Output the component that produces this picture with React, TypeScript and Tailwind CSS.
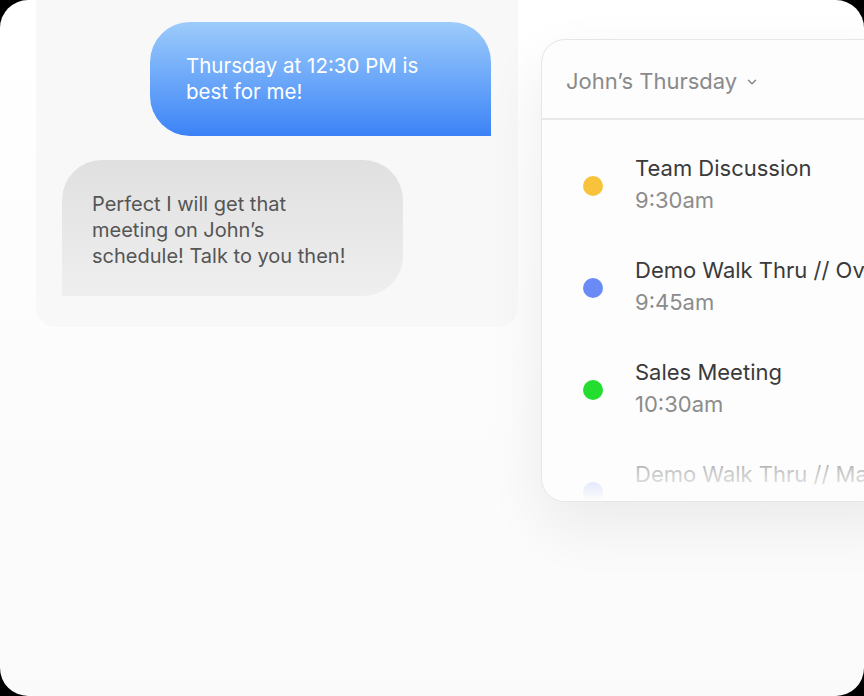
import { ChevronDown } from 'lucide-react'

interface Evento {
  titulo: string
  hora: string
  color: string
}

const eventos: Evento[] = [
  { titulo: 'Team Discussion', hora: '9:30am', color: 'bg-[#f7c33a]' },
  { titulo: 'Demo Walk Thru // Overview', hora: '9:45am', color: 'bg-[#6a8bf6]' },
  { titulo: 'Sales Meeting', hora: '10:30am', color: 'bg-[#23dd2f]' },
  { titulo: 'Demo Walk Thru // Marketing', hora: '11:00am', color: 'bg-[#6a8bf6]' },
]

export default function App() {
  return (
    <div className="h-[696px] w-[864px] bg-black" style={{ fontFamily: 'Inter, "Liberation Sans", sans-serif' }}>
      <div className="flex h-full w-full overflow-hidden rounded-[28px] bg-gradient-to-b from-white to-[#fafafa]">
        {/* chat */}
        <div className="ml-[36px] flex h-[327px] w-[482px] shrink-0 flex-col rounded-b-[20px] bg-[#f8f8f8] pt-[22px]">
          <div className="ml-[114px] w-[341px] rounded-t-[40px] rounded-bl-[40px] bg-gradient-to-b from-[#9dcbfa] to-[#3b82f6] px-[36px] pt-[31px] pb-[31px] text-[20.5px] leading-[26px] text-white">
            Thursday at 12:30 PM is
            <br />
            best for me!
          </div>
          <div className="mt-[24px] ml-[26px] w-[341px] rounded-t-[40px] rounded-br-[40px] bg-gradient-to-b from-[#e0e0e0] to-[#efefef] px-[30px] pt-[31px] pb-[27px] text-[20px] leading-[26px] text-[#555555]">
            Perfect I will get that
            <br />
            meeting on John&rsquo;s
            <br />
            schedule! Talk to you then!
          </div>
        </div>

        {/* calendario */}
        <div className="relative mt-[39px] ml-[23px] h-[463px] w-[380px] shrink-0 overflow-hidden rounded-[24px] border border-[#e6e6e6] bg-[#fdfdfd] shadow-[0_24px_60px_rgba(0,0,0,0.07)]">
          <div className="flex h-[80px] items-center gap-[8px] border-b-2 border-[#e8e8e8] pl-[24px] pt-[4px]">
            <span className="text-[22px] whitespace-nowrap text-[#8a8a8a]">John&rsquo;s Thursday</span>
            <ChevronDown className="mt-[2px] h-[14px] w-[14px] text-[#8a8a8a]" strokeWidth={2.5} />
          </div>
          <div className="flex flex-col gap-[38px] pt-[32px] pl-[41px]">
            {eventos.map((ev) => (
              <div key={ev.titulo} className="flex items-center gap-[32px]">
                <span className={`mt-[4px] h-[20px] w-[20px] shrink-0 rounded-full ${ev.color}`} />
                <div className="whitespace-nowrap text-[22px] leading-[32px]">
                  <p className="text-[#3a3a3a]">{ev.titulo}</p>
                  <p className="text-[#8c8c8c]">{ev.hora}</p>
                </div>
              </div>
            ))}
          </div>
          <div className="pointer-events-none absolute inset-x-0 bottom-0 h-[64px] bg-gradient-to-b from-[#fdfdfd]/0 via-[#fdfdfd]/70 to-[#fdfdfd]" />
        </div>
      </div>
    </div>
  )
}
